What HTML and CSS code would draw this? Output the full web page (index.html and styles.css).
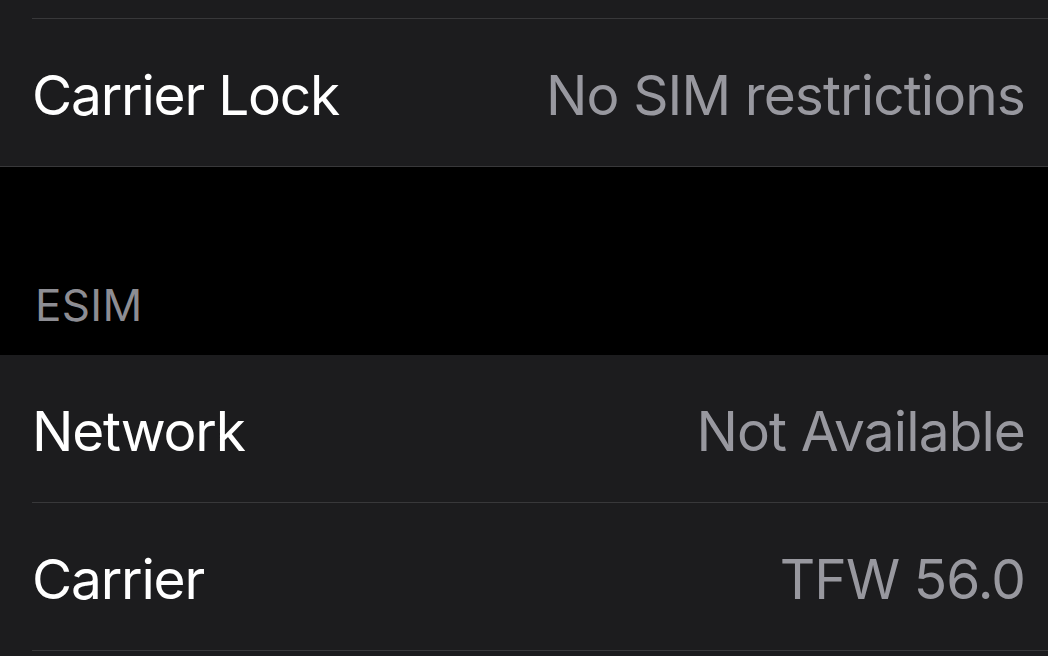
FILE: index.html
```html
<!DOCTYPE html>
<html>
<head>
<meta charset="utf-8">
<link rel="stylesheet" href="styles.css">
</head>
<body>
<div class="group">
  <div class="row stub"><div class="row-content"></div></div>
  <div class="row"><div class="row-content last"><span class="label">Carrier Lock</span><span class="value">No SIM restrictions</span></div></div>
</div>
<div class="section-header">ESIM</div>
<div class="group">
  <div class="row"><div class="row-content"><span class="label">Network</span><span class="value">Not Available</span></div></div>
  <div class="row"><div class="row-content"><span class="label">Carrier</span><span class="value">TFW 56.0</span></div></div>
  <div class="row tail"><div class="row-content last"></div></div>
</div>
</body>
</html>
```
FILE: styles.css
```css
html, body {
  margin: 0;
  padding: 0;
  background: #000;
  overflow: hidden;
}
body {
  width: 1048px;
  height: 656px;
  font-family: Inter, "Noto Sans", sans-serif;
}
.group {
  background: #1c1c1e;
}
.group:first-child {
  border-bottom: 1px solid #38383a;
}
.row {
  padding-left: 32px;
}
.row-content {
  height: 147px;
  border-bottom: 1px solid #38383a;
  display: flex;
  align-items: center;
  justify-content: space-between;
  padding-right: 23px;
}
.row-content.last {
  border-bottom: none;
}
.stub .row-content {
  height: 18px;
}
.tail .row-content {
  height: 5px;
}
.label {
  color: #ffffff;
  font-size: 55px;
  letter-spacing: -1.2px;
  padding-top: 4px;
}
.value {
  color: #98989f;
  font-size: 55px;
  letter-spacing: -0.9px;
  padding-top: 4px;
}
.section-header {
  height: 188px;
  box-sizing: border-box;
  display: flex;
  align-items: flex-end;
  padding: 0 0 23px 35px;
  color: #8d8d93;
  font-size: 44px;
  letter-spacing: 0.3px;
}
```
